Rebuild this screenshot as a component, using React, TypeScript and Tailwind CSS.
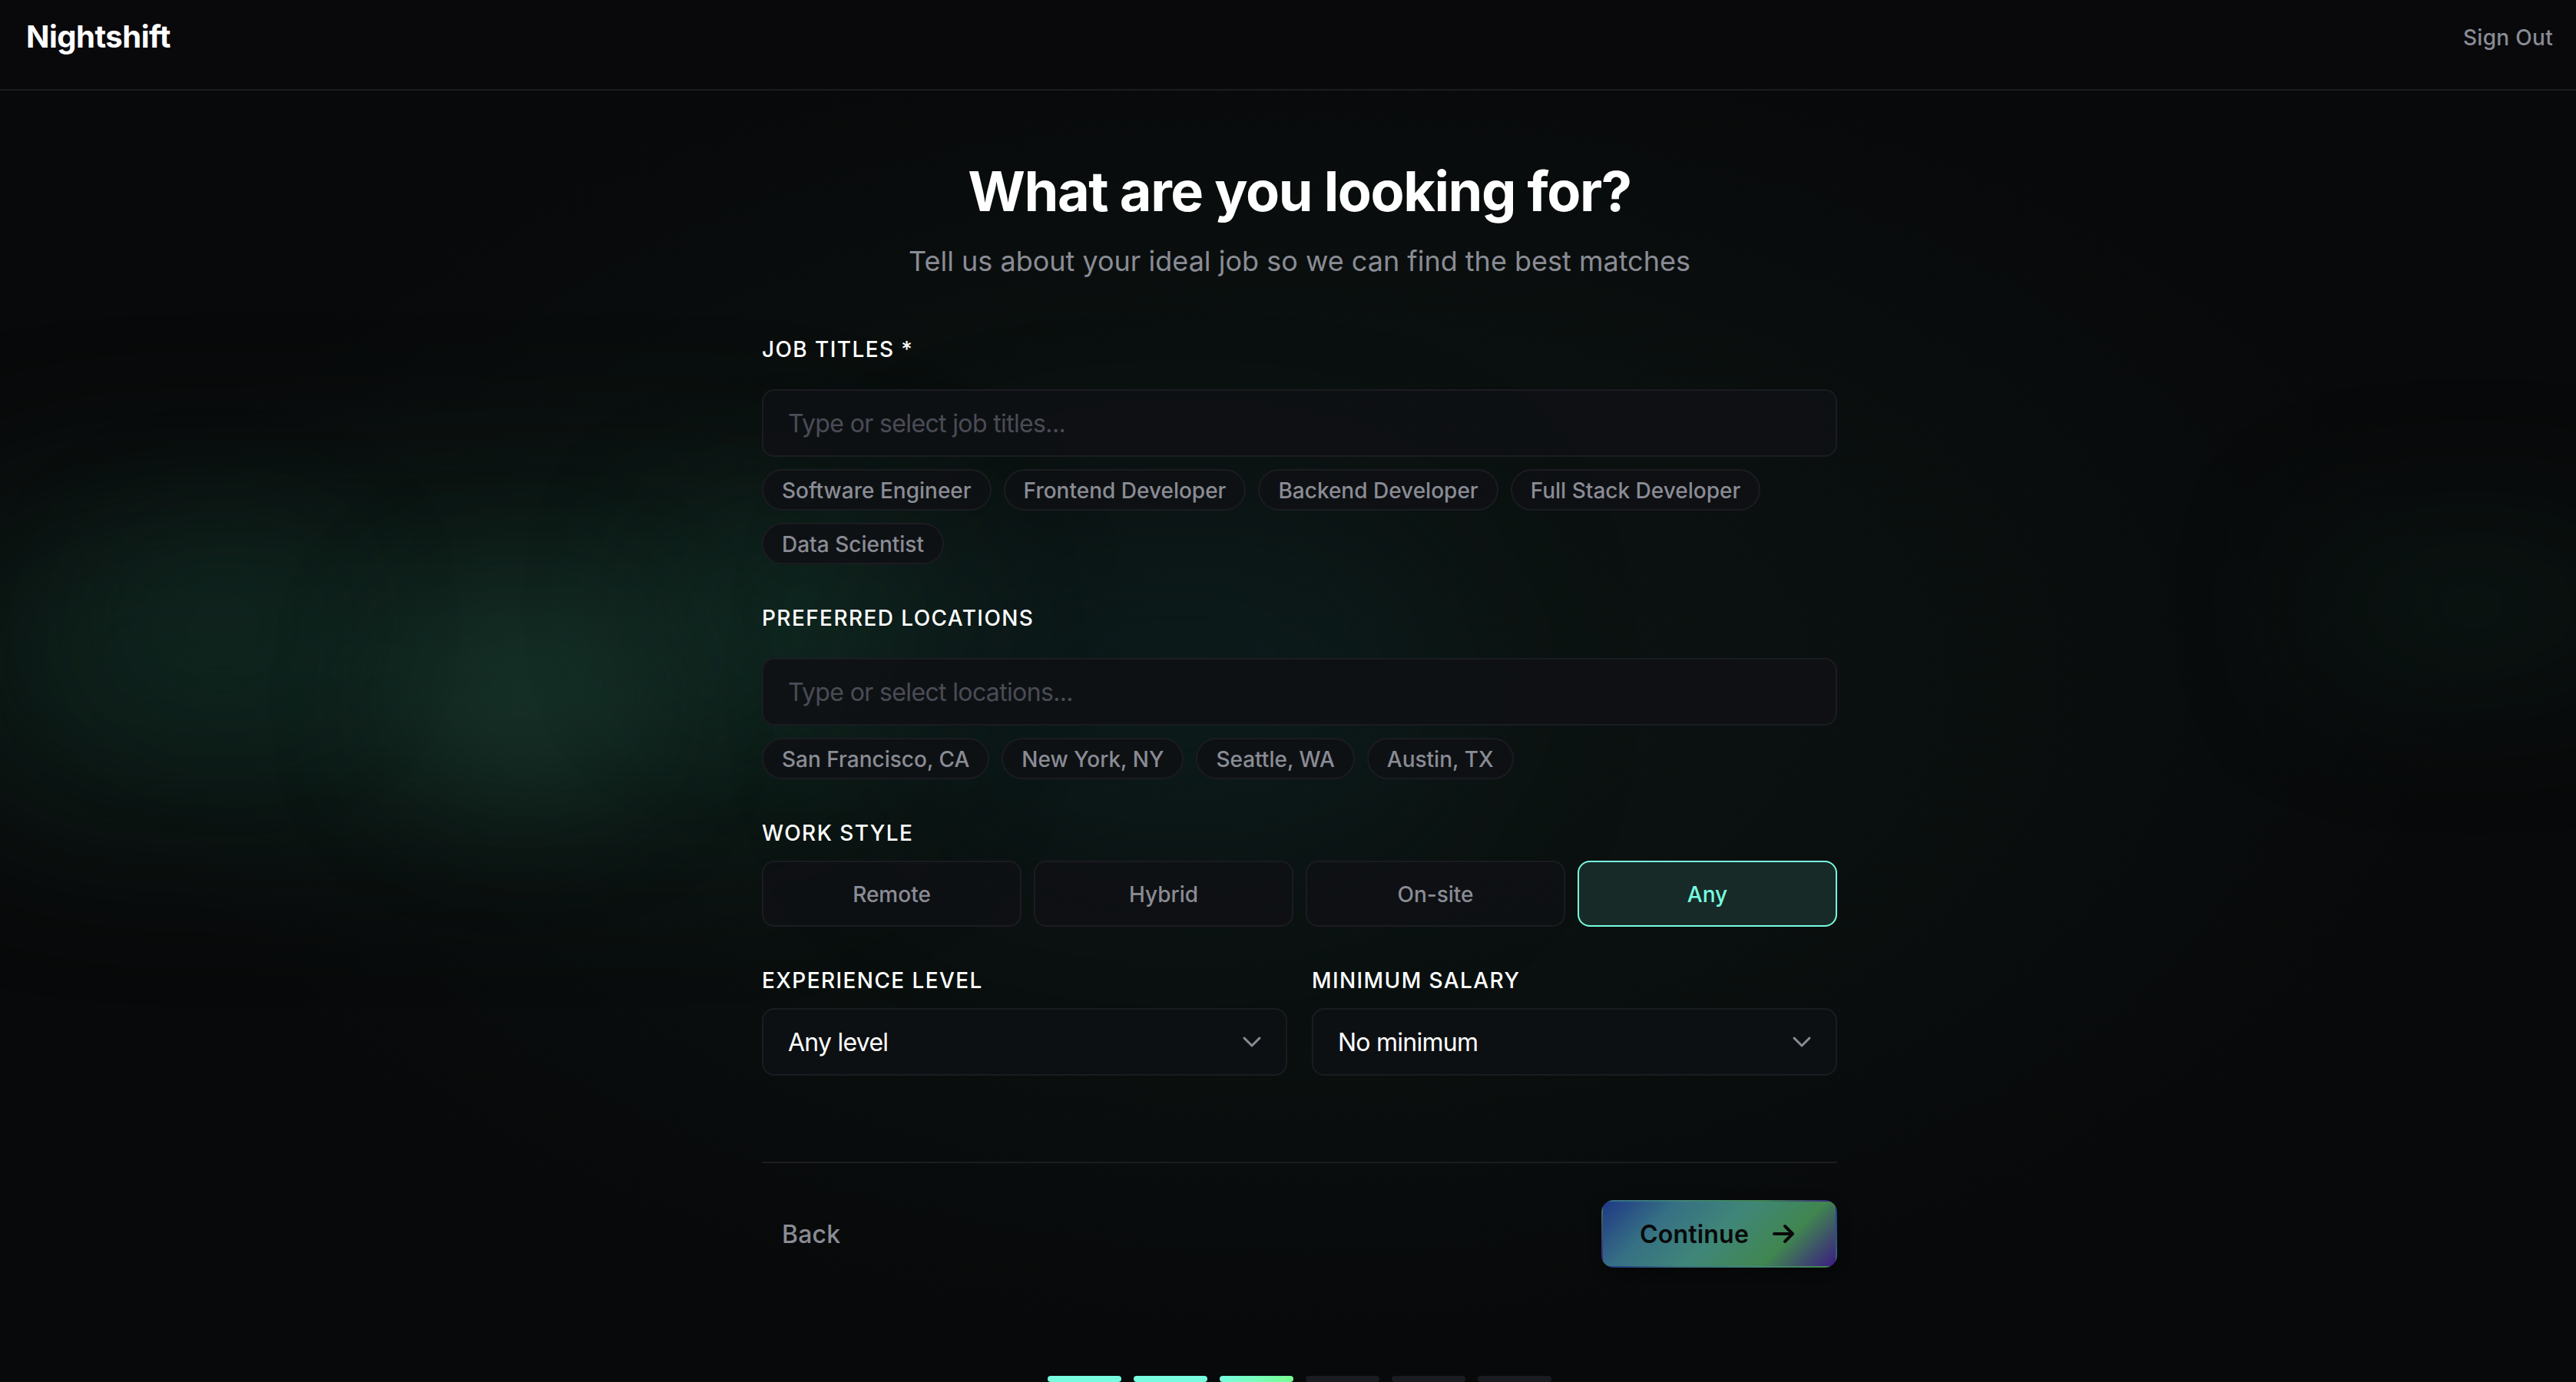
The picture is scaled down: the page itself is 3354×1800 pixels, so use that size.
import { useState } from 'react';

const JOB_TITLES = ['Software Engineer', 'Frontend Developer', 'Backend Developer', 'Full Stack Developer', 'Data Scientist'];
const LOCATIONS = ['San Francisco, CA', 'New York, NY', 'Seattle, WA', 'Austin, TX'];
const WORK_STYLES = ['Remote', 'Hybrid', 'On-site', 'Any'];
const STEPS = ['done', 'done', 'current', 'todo', 'todo', 'todo'];

function Aurora() {
  return (
    <div className="absolute inset-0 overflow-hidden pointer-events-none">
      <div className="absolute left-[150px] top-[20px] w-[3080px] h-[1740px] bg-[radial-gradient(closest-side,#0c1412_0%,#0a100f_50%,transparent_100%)]" />
      <div className="absolute left-[-80px] top-[660px] w-[1260px] h-[400px] rounded-full bg-[#14352a]/50 blur-[110px]" />
      <div className="absolute left-[140px] top-[700px] w-[300px] h-[220px] rounded-full bg-[#14352a]/30 blur-[80px]" />
      <div className="absolute left-[520px] top-[780px] w-[320px] h-[260px] rounded-full bg-[#1d4034]/50 blur-[80px]" />
      <div className="absolute left-[860px] top-[680px] w-[420px] h-[220px] rounded-full bg-[#14352a]/35 blur-[90px]" />
      <div className="absolute left-[1200px] top-[680px] w-[680px] h-[420px] rounded-full bg-[#0b2124]/50 blur-[120px]" />
      <div className="absolute left-[3020px] top-[700px] w-[400px] h-[180px] rounded-full bg-[#0b2019]/60 blur-[90px]" />
    </div>
  );
}

function Label({ children }: { children: string }) {
  return <div className="text-[28px] leading-[40px] font-medium tracking-[1.4px] uppercase whitespace-nowrap">{children}</div>;
}

function TagField({ label, placeholder, options }: { label: string; placeholder: string; options: string[] }) {
  const [value, setValue] = useState('');

  return (
    <div>
      <Label>{label}</Label>
      <input
        value={value}
        onChange={(e) => setValue(e.target.value)}
        placeholder={placeholder}
        className="mt-8 block w-full h-[88px] px-8 pt-px rounded-[16px] border-2 border-[#1b1c21] bg-[#0e1114]/90 text-[32px] tracking-[-0.64px] placeholder:text-[#4a4c55] outline-none"
      />
      <div className="mt-4 flex flex-wrap gap-4">
        {options.map((option) => (
          <button
            key={option}
            onClick={() => setValue(option)}
            className="h-[54px] px-6 pt-0.5 rounded-full border-2 border-[#1b1c21] bg-[#0e1114]/90 text-[28px] leading-[42px] font-medium text-[#8a8c95] whitespace-nowrap"
          >
            {option}
          </button>
        ))}
      </div>
    </div>
  );
}

function SelectField({ label, value }: { label: string; value: string }) {
  return (
    <div>
      <Label>{label}</Label>
      <button className="mt-4 w-full h-[88px] pl-8 pr-6 flex items-center justify-between rounded-[16px] border-2 border-[#1b1c21] bg-[#0d1013] text-[32px] tracking-[-0.75px]">
        <span className="pt-0.5">{value}</span>
        <svg width="40" height="40" viewBox="0 0 20 20" fill="none" stroke="#8a8c95" strokeWidth="1.5" strokeLinecap="round" strokeLinejoin="round">
          <path d="M5 7.5l5 5 5-5" />
        </svg>
      </button>
    </div>
  );
}

export default function App() {
  const [workStyle, setWorkStyle] = useState('Any');

  return (
    <div className="relative w-full h-[1800px] overflow-hidden bg-[#08090a] text-white font-['Inter',sans-serif]">
      <Aurora />

      <header className="relative h-[118px] pl-[34px] pr-[30px] pb-5 flex items-center justify-between border-b-2 border-[#1b1c21] bg-[#09090b]">
        <span className="text-[40px] font-bold tracking-[-0.5px]">Nightshift</span>
        <button className="pt-0.5 text-[28px] font-medium tracking-[0.3px] text-[#8a8c95]">Sign Out</button>
      </header>

      <main className="relative w-[1400px] ml-[992px] pt-[91px]">
        <h1 className="text-[72px] leading-[80px] font-bold tracking-[-1.44px] text-center">What are you looking for?</h1>
        <p className="mt-6 text-[36px] leading-[54px] text-center text-[#8a8c95]">
          Tell us about your ideal job so we can find the best matches
        </p>

        <div className="mt-[68px] flex flex-col gap-[50px]">
          <TagField label="Job Titles *" placeholder="Type or select job titles..." options={JOB_TITLES} />
          <TagField label="Preferred Locations" placeholder="Type or select locations..." options={LOCATIONS} />

          <div>
            <Label>Work Style</Label>
            <div className="mt-4 grid grid-cols-4 gap-4">
              {WORK_STYLES.map((style) => (
                <button
                  key={style}
                  onClick={() => setWorkStyle(style)}
                  className={`h-[86px] pt-0.5 rounded-[16px] border-2 text-[28px] font-medium ${
                    workStyle === style ? 'border-[#78fce0] bg-[#172a27] text-[#78fce0]' : 'border-[#1b1c21] bg-[#0e1114]/90 text-[#8a8c95]'
                  }`}
                >
                  {style}
                </button>
              ))}
            </div>
          </div>

          <div className="grid grid-cols-2 gap-8">
            <SelectField label="Experience Level" value="Any level" />
            <SelectField label="Minimum Salary" value="No minimum" />
          </div>
        </div>

        <div className="mt-[112px] pt-12 flex items-center justify-between border-t-2 border-[#1b1c21]">
          <button className="h-[88px] px-[26px] pt-0.5 text-[32px] font-medium tracking-[0.2px] text-[#8a8c95]">Back</button>
          <button className="h-[88px] w-[307px] px-12 flex items-center justify-between rounded-[16px] border-2 border-transparent bg-[linear-gradient(135deg,#1f3985_0%,#367084_25%,#408678_50%,#408650_75%,#3c1c82_100%)] text-[32px] font-semibold tracking-[0.2px] text-[#08090a] shadow-[0_4px_16px_rgba(0,0,0,0.4)]">
            <span className="pt-0.5">Continue</span>
            <svg width="40" height="40" viewBox="0 0 20 20" fill="none" stroke="currentColor" strokeWidth="2" strokeLinecap="round" strokeLinejoin="round">
              <path d="M4 10h12M11 5l5 5-5 5" />
            </svg>
          </button>
        </div>

        <div className="mt-[141px] flex justify-center gap-4">
          {STEPS.map((step, i) => (
            <div
              key={i}
              className={`w-24 h-2 rounded-full ${
                step === 'done' ? 'bg-[#78fce0]' : step === 'current' ? 'bg-linear-to-r from-[#78fce0] to-[#78fc90]' : 'bg-[#1b1c21]'
              }`}
            />
          ))}
        </div>
      </main>
    </div>
  );
}
